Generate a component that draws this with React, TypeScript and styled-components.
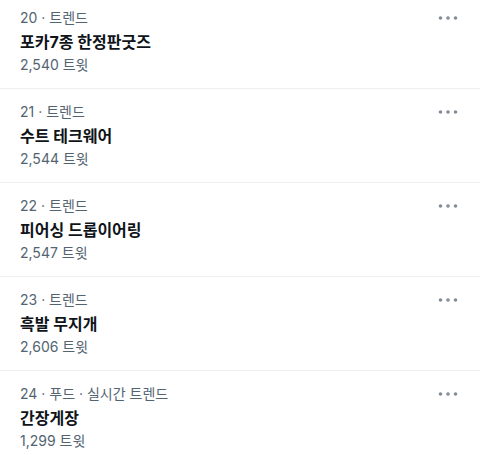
import React from "react";
import styled, { createGlobalStyle } from "styled-components";

const Global = createGlobalStyle`
  html, body { margin: 0; padding: 0; background: #ffffff; }
  body { font-family: Inter, "Noto Sans CJK KR", sans-serif; -webkit-font-smoothing: antialiased; }
`;

const List = styled.div`
  display: flex;
  flex-direction: column;
  margin-top: -5px;
  width: 480px;
  overflow: hidden;
`;

const Row = styled.div`
  display: flex;
  justify-content: space-between;
  align-items: flex-start;
  height: 93px;
  box-sizing: content-box;
  padding: 0 22px 0 20px;
  border-bottom: 1px solid #eceff1;
`;

const Body = styled.div`
  display: flex;
  flex-direction: column;
  padding-top: 13px;
`;

const Meta = styled.div`
  font-size: 14px;
  line-height: 20px;
  color: #536471;
`;

const Title = styled.div`
  font-size: 16px;
  line-height: 24px;
  font-weight: 700;
  color: #0f1419;
  margin-top: 2px;
`;

const Count = styled.div`
  font-size: 14px;
  line-height: 20px;
  color: #536471;
  margin-top: 1px;
`;

const More = styled.div`
  display: flex;
  padding-top: 20px;
  color: #818c96;
`;

const DotsIcon = () => (
  <svg width="20" height="6" viewBox="0 0 20 6" fill="currentColor">
    <circle cx="2.5" cy="3" r="1.8" />
    <circle cx="10" cy="3" r="1.8" />
    <circle cx="17.5" cy="3" r="1.8" />
  </svg>
);

const trends = [
  { rank: 20, cat: "트렌드", title: "포카7종 한정판굿즈", count: "2,540" },
  { rank: 21, cat: "트렌드", title: "수트 테크웨어", count: "2,544" },
  { rank: 22, cat: "트렌드", title: "피어싱 드롭이어링", count: "2,547" },
  { rank: 23, cat: "트렌드", title: "흑발 무지개", count: "2,606" },
  { rank: 24, cat: "푸드 · 실시간 트렌드", title: "간장게장", count: "1,299" },
];

export default function App() {
  return (
    <>
      <Global />
      <List>
        {trends.map((t) => (
          <Row key={t.rank}>
            <Body>
              <Meta>
                {t.rank} · {t.cat}
              </Meta>
              <Title>{t.title}</Title>
              <Count>{t.count} 트윗</Count>
            </Body>
            <More>
              <DotsIcon />
            </More>
          </Row>
        ))}
      </List>
    </>
  );
}
